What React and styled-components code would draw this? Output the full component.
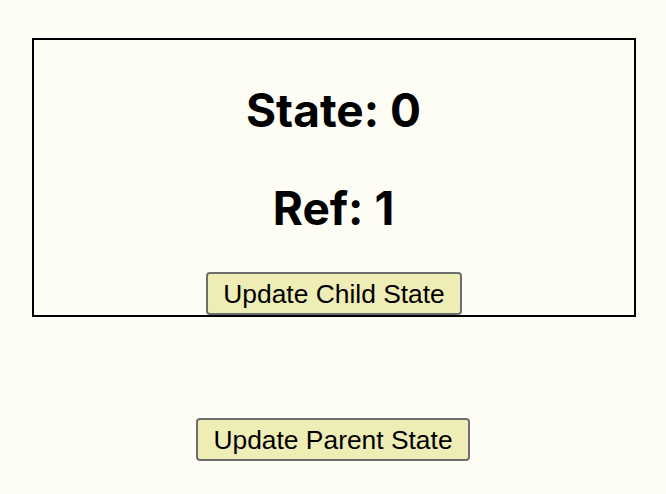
import React, { useRef, useState } from 'react';
import styled, { createGlobalStyle } from 'styled-components';

const Global = createGlobalStyle`
  html, body {
    margin: 0;
    background: #fdfdf5;
  }
  body {
    font-family: "Liberation Sans", Arial, sans-serif;
    color: #000;
  }
`;

function Child() {
  const [count, setCount] = useState(0);
  const ref = useRef(1);

  return (
    <Box>
      <Heading>State: {count}</Heading>
      <Heading $second>Ref: {ref.current}</Heading>
      <Button $child onClick={() => setCount(c => c)}>Update Child State</Button>
    </Box>
  );
}

export default function App() {
  const [, setTick] = useState(0);
  return (
    <Page>
      <Global />
      <Child />
      <Button onClick={() => setTick(t => t + 1)}>Update Parent State</Button>
    </Page>
  );
}

const Page = styled.div`
  display: flex;
  flex-direction: column;
  align-items: center;
  padding-top: 38px;
  min-height: 494px;
  box-sizing: border-box;
`;

const Box = styled.div`
  width: 604px;
  height: 279px;
  box-sizing: border-box;
  border: 2px solid #000;
  margin-left: 1px;
  display: flex;
  flex-direction: column;
  align-items: center;
  padding-top: 48px;
  margin-bottom: 101px;
`;

const Heading = styled.h1`
  margin: ${p => (p.$second ? '54px 0 0' : '0')};
  font-family: Inter, "Liberation Sans", Arial, sans-serif;
  font-size: 46px;
  line-height: 44px;
  font-weight: 700;
  letter-spacing: 0;
`;

const Button = styled.button`
  font-family: "Liberation Sans", Arial, sans-serif;
  font-size: 26.4px;
  line-height: 30px;
  color: #000;
  background: #efedb6;
  border: 2px solid #6e6e6e;
  border-radius: 4px;
  padding: 4.5px 15px;
  margin-top: ${p => (p.$child ? '42px' : '0')};
  margin-left: ${p => (p.$child ? '1px' : '0')};
  cursor: pointer;
`;
